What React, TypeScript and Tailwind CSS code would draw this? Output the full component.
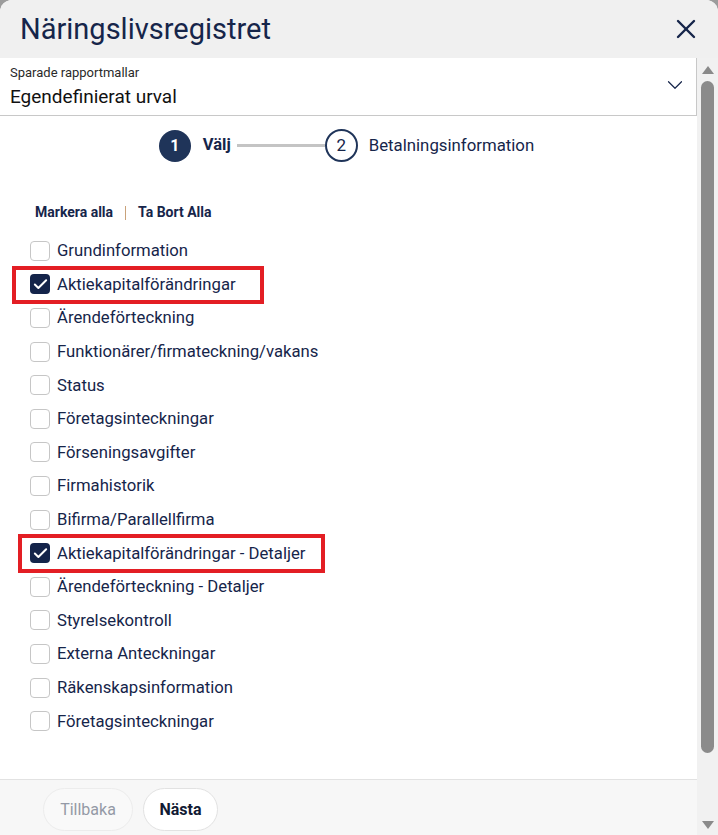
import { X, ChevronDown, Check } from "lucide-react";

const items = [
  { label: "Grundinformation" },
  { label: "Aktiekapitalförändringar", checked: true, box: "left-[12px] w-[252px]" },
  { label: "Ärendeförteckning" },
  { label: "Funktionärer/firmateckning/vakans" },
  { label: "Status" },
  { label: "Företagsinteckningar" },
  { label: "Förseningsavgifter" },
  { label: "Firmahistorik" },
  { label: "Bifirma/Parallellfirma" },
  { label: "Aktiekapitalförändringar - Detaljer", checked: true, box: "left-[18px] w-[307px]" },
  { label: "Ärendeförteckning - Detaljer" },
  { label: "Styrelsekontroll" },
  { label: "Externa Anteckningar" },
  { label: "Räkenskapsinformation" },
  { label: "Företagsinteckningar" },
];

export default function App() {
  return (
    <div
      className="w-[718px] h-[835px] bg-[#9c9c9c] overflow-hidden text-[#17264a]"
      style={{ fontFamily: "Roboto, 'Liberation Sans', sans-serif" }}
    >
      <div className="h-full flex flex-col bg-white rounded-t-[12px] overflow-hidden">
        {/* header */}
        <div className="h-[58px] shrink-0 bg-[#f0f0f0] flex items-center justify-between pl-[20px] pr-[16px]">
          <h2 className="text-[29px] leading-none text-[#16254a]">Näringslivsregistret</h2>
          <X className="w-[32px] h-[32px] text-[#16254a]" strokeWidth={1.8} />
        </div>

        <div className="flex flex-1 min-h-0">
          <div className="flex-1 flex flex-col min-w-0">
            {/* dropdown */}
            <div className="h-[58px] shrink-0 border-r border-b border-[#c8c8c8] flex items-center justify-between pl-[10px] pr-[8px]">
              <div className="flex flex-col">
                <span className="text-[13px] leading-[16px] text-[#2a2a2a] mt-[-1px]">Sparade rapportmallar</span>
                <span className="text-[19px] leading-[22px] text-[#111] mt-[5px]">Egendefinierat urval</span>
              </div>
              <ChevronDown className="w-[26px] h-[26px] text-[#16254a] mb-[4px]" strokeWidth={1.1} />
            </div>

            {/* body */}
            <div className="flex-1 min-h-0">
              <div className="flex items-center justify-center pt-[13px] pr-[4px]">
                <div className="w-[32px] h-[32px] rounded-full bg-[#1f3459] text-white flex items-center justify-center text-[16px] font-bold">
                  1
                </div>
                <span className="ml-[12px] text-[16.5px] font-bold text-[#16254a]">Välj</span>
                <div className="w-[88px] h-[3px] bg-[#c4c4c4] ml-[6px]" />
                <div className="w-[33px] h-[33px] rounded-full border-2 border-[#1f3459] bg-white flex items-center justify-center text-[17px] text-[#16254a]">
                  2
                </div>
                <span className="ml-[11px] text-[16.8px] text-[#16254a]">Betalningsinformation</span>
              </div>

              <div className="flex items-center pl-[35px] mt-[40px] text-[14px] font-bold text-[#16254a]">
                <span>Markera alla</span>
                <span className="w-[1px] h-[14px] bg-[#c9a27a] mx-[12px]" />
                <span>Ta Bort Alla</span>
              </div>

              <ul className="mt-[11px]">
                {items.map((it, i) => (
                  <li key={i} className="relative h-[33.6px] flex items-center pl-[30px]">
                    {it.box && (
                      <span className={`absolute ${it.box} top-[-2px] bottom-[-3px] border-[4px] border-[#e31e24]`} />
                    )}
                    <span
                      className={
                        it.checked
                          ? "w-[20px] h-[20px] rounded-[4px] bg-[#14244a] flex items-center justify-center"
                          : "w-[20px] h-[20px] rounded-[4px] border border-[#c6c6c6] bg-white"
                      }
                    >
                      {it.checked && <Check className="w-[17px] h-[17px] text-white" strokeWidth={2.8} />}
                    </span>
                    <span className="ml-[7px] text-[16.7px] text-[#16254a]">{it.label}</span>
                  </li>
                ))}
              </ul>
            </div>

            {/* footer */}
            <div className="h-[56px] shrink-0 bg-[#f7f7f7] border-t border-[#e2e2e2] flex items-center gap-[10px] pl-[43px] pt-[4px]">
              <button className="h-[43px] w-[90px] rounded-full border border-[#ececec] bg-[#f9f9f9] text-[16px] text-[#9499a6]">
                Tillbaka
              </button>
              <button className="h-[43px] w-[75px] rounded-full border border-[#e2e2e2] bg-white text-[16px] font-bold text-[#111a33]">
                Nästa
              </button>
            </div>
          </div>

          {/* scrollbar */}
          <div className="w-[21px] shrink-0 bg-[#f1f1f1] flex flex-col items-center">
            <svg width="12" height="8" viewBox="0 0 12 8" className="mt-[8px]">
              <path d="M6 0 L12 8 L0 8 Z" fill="#8a8a8a" />
            </svg>
            <div className="w-[13px] h-[672px] mt-[7px] rounded-full bg-[#8b8b8b]" />
            <div className="flex-1" />
            <svg width="12" height="8" viewBox="0 0 12 8" className="mb-[6px]">
              <path d="M0 0 L12 0 L6 8 Z" fill="#8a8a8a" />
            </svg>
          </div>
        </div>
      </div>
    </div>
  );
}
